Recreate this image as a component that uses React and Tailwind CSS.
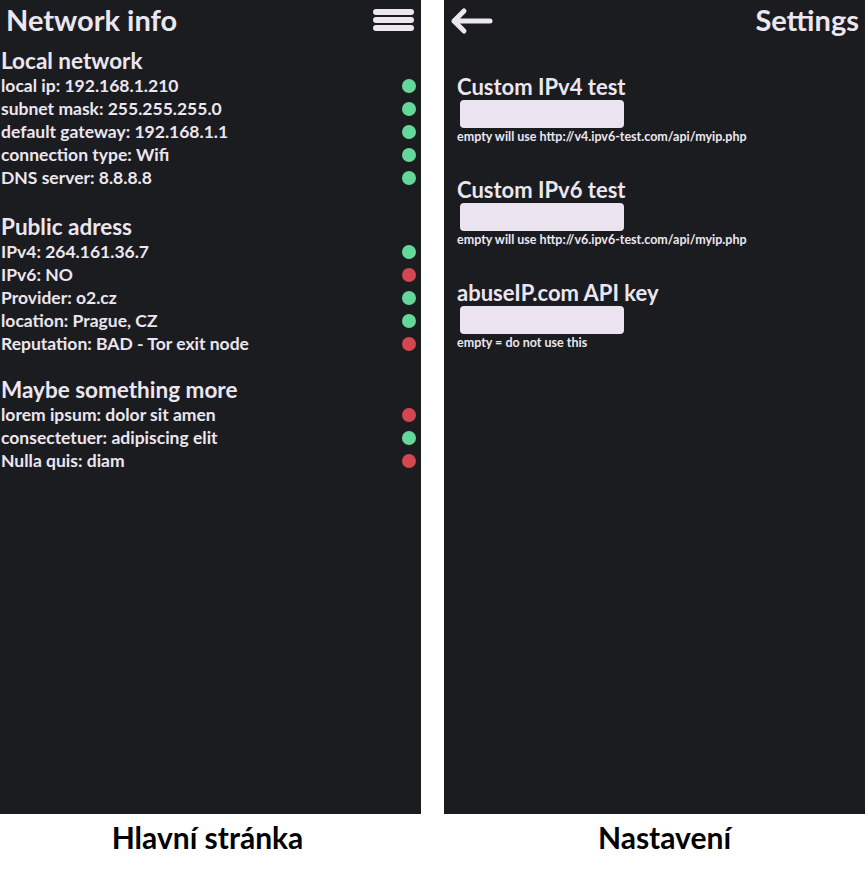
import React from 'react';

const font = { fontFamily: 'Lato, "Open Sans", sans-serif' };

const sections = [
  {
    title: 'Local network',
    rows: [
      ['local ip: 192.168.1.210', true],
      ['subnet mask: 255.255.255.0', true],
      ['default gateway: 192.168.1.1', true],
      ['connection type: Wifi', true],
      ['DNS server: 8.8.8.8', true],
    ],
  },
  {
    title: 'Public adress',
    rows: [
      ['IPv4: 264.161.36.7', true],
      ['IPv6: NO', false],
      ['Provider: o2.cz', true],
      ['location: Prague, CZ', true],
      ['Reputation: BAD - Tor exit node', false],
    ],
  },
  {
    title: 'Maybe something more',
    rows: [
      ['lorem ipsum: dolor sit amen', false],
      ['consectetuer: adipiscing elit', true],
      ['Nulla quis: diam', false],
    ],
  },
];

const settings = [
  ['Custom IPv4 test', 'empty will use http://v4.ipv6-test.com/api/myip.php'],
  ['Custom IPv6 test', 'empty will use http://v6.ipv6-test.com/api/myip.php'],
  ['abuseIP.com API key', 'empty = do not use this'],
];

const Dot = ({ ok }) => (
  <span className={`w-[14px] h-[14px] rounded-full ${ok ? 'bg-[#64d89b]' : 'bg-[#d44751]'}`} />
);

const Hamburger = () => (
  <div className="flex flex-col gap-[2px] mt-[9px] mr-[7px]">
    <span className="block w-[41px] h-[6px] rounded-[3px] bg-[#ece6f0]" />
    <span className="block w-[41px] h-[6px] rounded-[3px] bg-[#ece6f0]" />
    <span className="block w-[41px] h-[6px] rounded-[3px] bg-[#ece6f0]" />
  </div>
);

const BackArrow = () => (
  <svg width="46" height="28" viewBox="0 0 46 28" className="mt-[7px] ml-[6px]">
    <path
      d="M4 14 H40 M4 14 L14 4 M4 14 L14 24"
      stroke="#ece6f0"
      strokeWidth="5"
      strokeLinecap="round"
      strokeLinejoin="round"
      fill="none"
    />
  </svg>
);

const MainPage = () => (
  <div className="w-[421px] h-[814px] bg-[#1b1c20] text-[#ece6f0] font-bold">
    <div className="flex justify-between h-[40px]">
      <h1 className="text-[29px] leading-[40px] pl-[6px]">Network info</h1>
      <Hamburger />
    </div>
    <div className="mt-[8px]">
      {sections.map((s, i) => (
        <div key={s.title} className={i === 0 ? '' : i === 1 ? 'mt-[25px]' : 'mt-[22px]'}>
          <h2 className="text-[22.5px] leading-[26px] pl-[1px]">{s.title}</h2>
          {s.rows.map(([label, ok]) => (
            <div key={label} className="flex items-center justify-between h-[23px] pr-[5px]">
              <span className="text-[17.5px] leading-[23px] pl-[1px]">{label}</span>
              <Dot ok={ok} />
            </div>
          ))}
        </div>
      ))}
    </div>
  </div>
);

const SettingsPage = () => (
  <div className="w-[421px] h-[814px] bg-[#1b1c20] text-[#ece6f0] font-bold">
    <div className="flex justify-between h-[40px]">
      <BackArrow />
      <h1 className="text-[29px] leading-[40px] pr-[6px]">Settings</h1>
    </div>
    <div className="pl-[13px] mt-[34px]">
      {settings.map(([title, help], i) => (
        <div key={title} className={i === 0 ? '' : 'mt-[33px]'}>
          <h2 className="text-[22px] leading-[26px]">{title}</h2>
          <div className="ml-[3px] w-[164px] h-[28px] rounded-[4px] bg-[#ebe3ef]" />
          <p className="text-[12.5px] leading-[15px] mt-[1px]">{help}</p>
        </div>
      ))}
    </div>
  </div>
);

export default function App() {
  return (
    <div className="w-[865px] h-[870px] bg-white" style={font}>
      <div className="flex gap-[23px]">
        <MainPage />
        <SettingsPage />
      </div>
      <div className="flex text-black font-bold text-[30px] leading-[34px] mt-[6px]">
        <div className="w-[421px] text-center pr-[6px]">Hlavní stránka</div>
        <div className="w-[421px] ml-[23px] text-center pl-[20px]">Nastavení</div>
      </div>
    </div>
  );
}
